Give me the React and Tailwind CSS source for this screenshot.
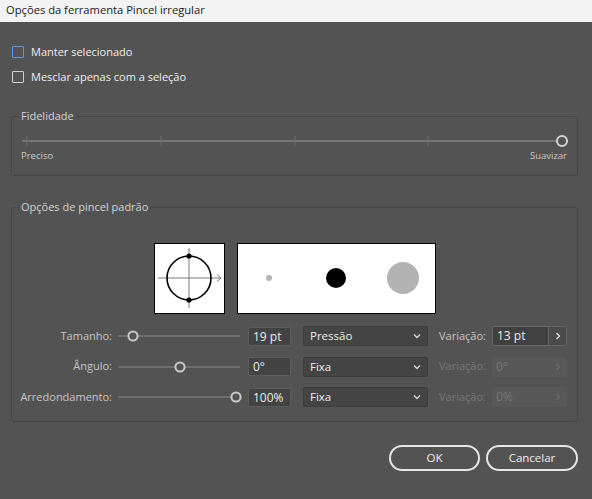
import React from 'react';

const FONT = { fontFamily: '"Open Sans", "Noto Sans", sans-serif' };

// trilho de slider desenhado em svg; knob = posição x do botão
function RowSlider({ knob }) {
    return (
        <svg width="124" height="14" className="block">
            <line x1="0" y1="7" x2="122" y2="7" stroke="#6e6e6e" strokeWidth="2" />
            <circle cx={knob} cy="7" r="4.6" fill="#535353" stroke="#c9c9c9" strokeWidth="2" />
        </svg>
    );
}

function Chevron({ className }) {
    return (
        <svg width="8" height="8" viewBox="0 0 8 8" className={className}>
            <path d="M1 2.5 L4 5.5 L7 2.5" fill="none" stroke="currentColor" strokeWidth="1.3" />
        </svg>
    );
}

function ChevronRight({ className }) {
    return (
        <svg width="8" height="8" viewBox="0 0 8 8" className={className}>
            <path d="M2.5 1 L5.5 4 L2.5 7" fill="none" stroke="currentColor" strokeWidth="1.3" />
        </svg>
    );
}

function BrushRow({ label, knob, value, mode, variation, active }) {
    return (
        <div className="flex items-center h-5">
            <div className="w-[101px] text-right text-[11px] text-[#c4c4c4] pr-px">{label}</div>
            <div className="ml-[5px]">
                <RowSlider knob={knob} />
            </div>
            <div className="ml-[6px] w-[43px] h-[19px] bg-[#434343] border border-[#5c5c5c] rounded-[2px] text-[12px] text-[#ececec] pl-[4px] leading-[17px]">
                {value}
            </div>
            <div className="ml-[12px] w-[125px] h-5 bg-[#444444] border border-[#3d3d3d] rounded-[2px] flex items-center justify-between pl-[6px] pr-[6px] text-[11.5px] text-[#ececec]">
                <span>{mode}</span>
                <Chevron className="text-[#d8d8d8]" />
            </div>
            <div className={`ml-[11px] w-[53px] text-[11px] ${active ? 'text-[#c4c4c4]' : 'text-[#787878]'}`}>Variação:</div>
            {active ? (
                <div className="flex h-5">
                    <div className="w-[57px] bg-[#404040] border border-[#666666] rounded-l-[2px] text-[12px] text-[#ececec] pl-[4px] leading-[18px]">
                        {variation}
                    </div>
                    <div className="w-[18px] bg-[#4a4a4a] border border-l-0 border-[#666666] rounded-r-[2px] flex items-center justify-center">
                        <ChevronRight className="text-[#e0e0e0]" />
                    </div>
                </div>
            ) : (
                <div className="flex h-5 w-[75px] bg-[#585858] rounded-[2px]">
                    <div className="w-[57px] text-[12px] text-[#767676] pl-[4px] leading-5">{variation}</div>
                    <div className="w-[18px] flex items-center justify-center">
                        <ChevronRight className="text-[#6c6c6c]" />
                    </div>
                </div>
            )}
        </div>
    );
}

export default function App() {
    return (
        <div className="w-[592px] h-[499px] bg-[#535353] overflow-hidden" style={FONT}>
            <div className="h-[22px] bg-[#f3f3f3] flex items-center pl-[6px] text-[11.2px] text-[#1a1a1a] pb-px">
                Opções da ferramenta Pincel irregular
            </div>

            {/* checkboxes */}
            <div className="ml-[12px] mt-[22px] flex items-center h-4 gap-[7px]">
                <div className="w-[12px] h-[12px] border border-[#5d9ce3] rounded-[1px]" />
                <span className="text-[11px] text-[#ededed]">Manter selecionado</span>
            </div>
            <div className="ml-[12px] mt-[9px] flex items-center h-4 gap-[7px]">
                <div className="w-[12px] h-[12px] border border-[#d0d0d0] rounded-[1px]" />
                <span className="text-[11px] text-[#ededed]">Mesclar apenas com a seleção</span>
            </div>

            {/* Fidelidade */}
            <fieldset className="ml-[11px] mt-[23px] w-[567px] border border-[#474747] rounded-[3px] pb-[13px]">
                <legend className="ml-[7px] px-[2px] text-[11px] leading-4 text-[#d2d2d2]">Fidelidade</legend>
                <svg width="565" height="14" className="block mt-[10px]">
                    <line x1="10" y1="7" x2="545" y2="7" stroke="#767676" strokeWidth="2" />
                    {[14.7, 149, 283, 416].map((x) => (
                        <line key={x} x1={x} y1="2" x2={x} y2="12" stroke="#6c6c6c" strokeWidth="1" />
                    ))}
                    <circle cx="550" cy="7" r="5" fill="#535353" stroke="#d4d4d4" strokeWidth="2" />
                </svg>
                <div className="mt-[2px] flex justify-between pl-[9px] pr-[10px] text-[9.5px] leading-3 text-[#c8c8c8]">
                    <span>Preciso</span>
                    <span>Suavizar</span>
                </div>
            </fieldset>

            {/* Opções de pincel padrão */}
            <fieldset className="ml-[11px] mt-[23px] w-[567px] border border-[#474747] rounded-[3px] pb-[14px]">
                <legend className="ml-[7px] px-[2px] text-[11px] leading-4 text-[#d2d2d2]">Opções de pincel padrão</legend>
                <div className="mt-[28px] flex justify-center gap-[12px]">
                    <div className="w-[71px] h-[71px] bg-white border border-black">
                        <svg width="69" height="69" className="block">
                            <line x1="3" y1="34" x2="66" y2="34" stroke="#7a7a7a" strokeWidth="1" />
                            <path d="M62 30.5 L66 34 L62 37.5" fill="none" stroke="#7a7a7a" strokeWidth="1" />
                            <line x1="34" y1="4" x2="34" y2="64" stroke="#7a7a7a" strokeWidth="1" />
                            <circle cx="34" cy="34" r="22" fill="none" stroke="#000" strokeWidth="1.6" />
                            <circle cx="34" cy="12" r="2.6" fill="#000" />
                            <circle cx="34" cy="56" r="2.6" fill="#000" />
                        </svg>
                    </div>
                    <div className="w-[199px] h-[71px] bg-white border border-black">
                        <svg width="197" height="69" className="block">
                            <circle cx="31" cy="34" r="3" fill="#b3b3b3" />
                            <circle cx="98" cy="34" r="10" fill="#000" />
                            <circle cx="165" cy="34" r="16" fill="#b3b3b3" />
                        </svg>
                    </div>
                </div>
                <div className="mt-[12px] flex flex-col gap-[10.5px]">
                    <BrushRow label="Tamanho:" knob={15} value="19 pt" mode="Pressão" variation="13 pt" active />
                    <BrushRow label="Ângulo:" knob={62} value="0°" mode="Fixa" variation="0°" />
                    <BrushRow label="Arredondamento:" knob={118} value="100%" mode="Fixa" variation="0%" />
                </div>
            </fieldset>

            <div className="mt-[23px] flex justify-end gap-[6px] pr-[14px]">
                <button className="w-[91px] h-[26px] rounded-full border-2 border-[#e6e6e6] text-[11.5px] text-[#ececec]">OK</button>
                <button className="w-[92px] h-[26px] rounded-full border-2 border-[#e6e6e6] text-[11.5px] text-[#ececec]">Cancelar</button>
            </div>
        </div>
    );
}
